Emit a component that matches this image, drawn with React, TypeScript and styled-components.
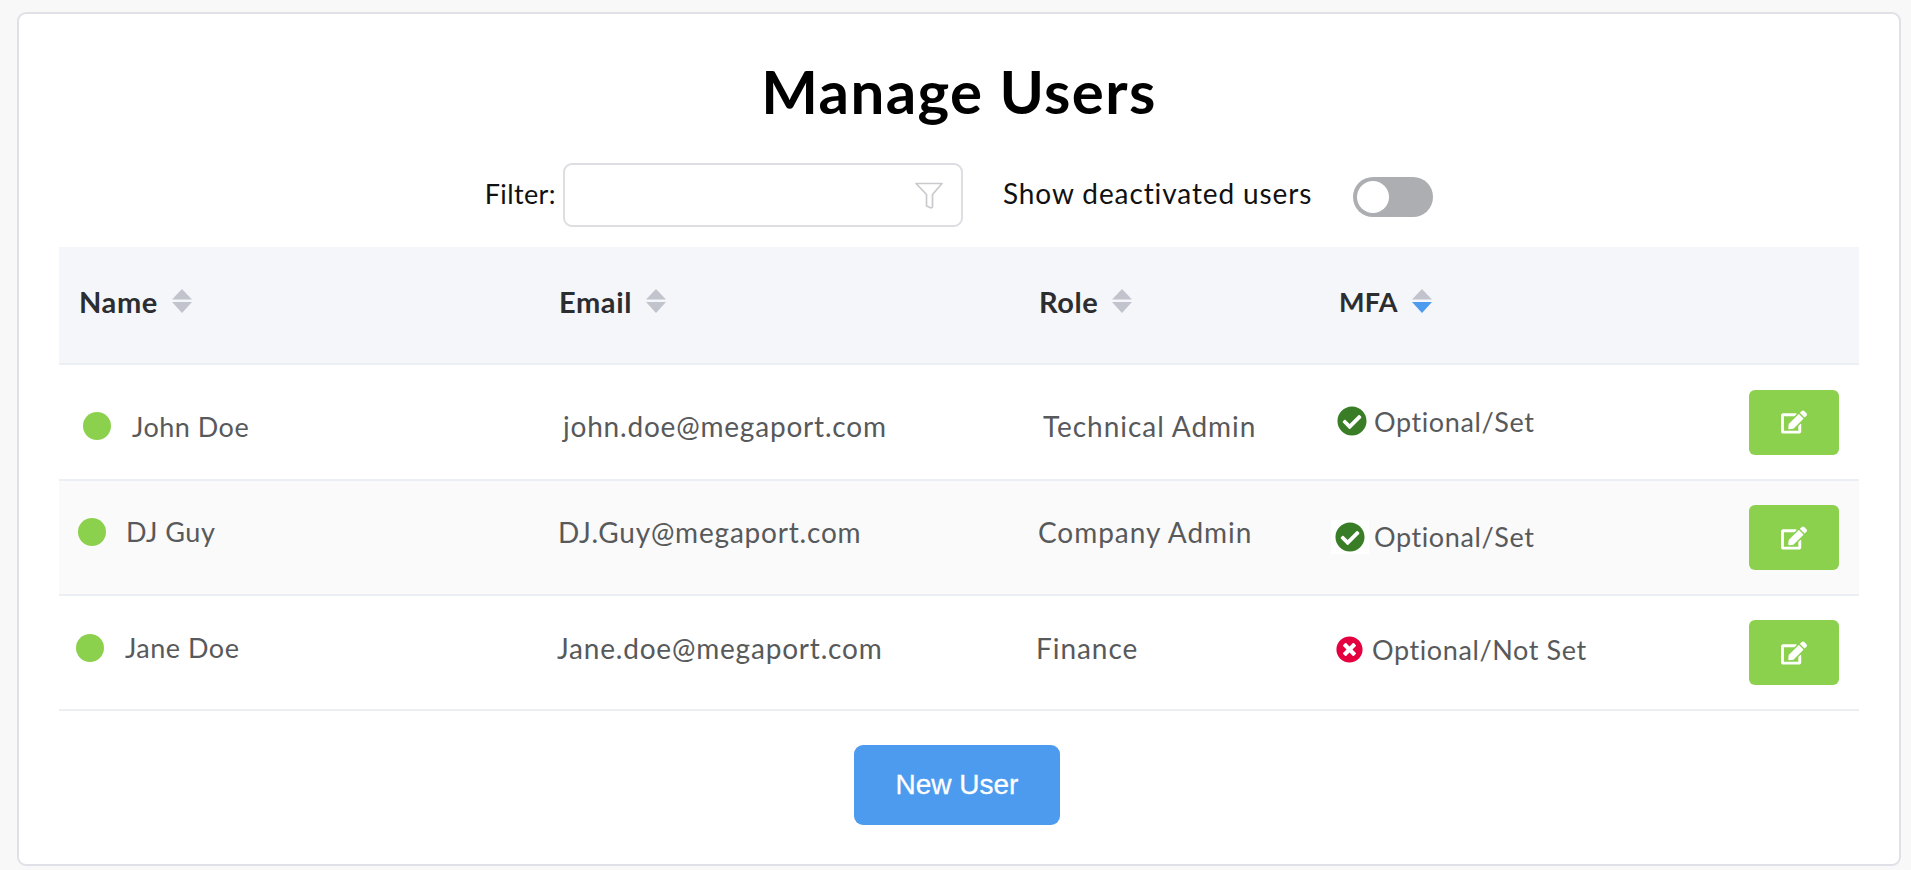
import React from "react";
import styled, { createGlobalStyle } from "styled-components";
import { FaCheckCircle, FaEdit, FaTimesCircle } from "react-icons/fa";

const colour = {
  green: "#8cd14e",
  blue: "#4d9bee",
  border: "#ebeef2",
  text: "#58595b",
  heading: "#2c2d30",
};

const GlobalStyle = createGlobalStyle`
  html, body {
    margin: 0;
    padding: 0;
    background: #f8f8f8;
  }
  body {
    font-family: "Lato", "Liberation Sans", sans-serif;
  }
`;

const Page = styled.div`
  box-sizing: border-box;
  height: 870px;
  padding: 12px 10px 4px 17px;
`;

const Card = styled.div`
  box-sizing: border-box;
  height: 854px;
  padding: 42px 40px 0;
  background: #fff;
  border: 2px solid #e0e1e7;
  border-radius: 9px;
  display: flex;
  flex-direction: column;
`;

const Title = styled.h1`
  margin: 0;
  height: 70px;
  line-height: 70px;
  font-size: 60px;
  font-weight: 700;
  letter-spacing: 1.4px;
  text-align: center;
  color: #000;
`;

const Toolbar = styled.div`
  margin-top: 37px;
  height: 64px;
  display: flex;
  align-items: center;
  justify-content: center;
`;

const ToolbarLabel = styled.span<{ $wide?: boolean }>`
  font-size: ${(p) => (p.$wide ? 28 : 27)}px;
  letter-spacing: ${(p) => (p.$wide ? 0.9 : 0.4)}px;
  color: #111;
  padding-bottom: 4px;
`;

const FilterBox = styled.div`
  box-sizing: border-box;
  width: 400px;
  height: 64px;
  margin: 0 40px 0 7px;
  padding-right: 18px;
  border: 2px solid #dddde2;
  border-radius: 9px;
  display: flex;
  align-items: center;
  justify-content: flex-end;
`;

const Toggle = styled.div`
  box-sizing: border-box;
  width: 80px;
  height: 40px;
  margin: 4px 0 0 41px;
  padding: 4px;
  background: #adaeb2;
  border-radius: 20px;
`;

const ToggleKnob = styled.div`
  width: 32px;
  height: 32px;
  background: #fff;
  border-radius: 50%;
`;

const Table = styled.div`
  margin-top: 20px;
`;

const gridColumns = "497px 480px 295px 1fr 110px";

const HeaderRow = styled.div`
  box-sizing: border-box;
  height: 118px;
  padding-bottom: 8px;
  background: #f5f6fa;
  border-bottom: 2px solid ${colour.border};
  display: grid;
  grid-template-columns: ${gridColumns};
  align-items: center;
`;

const HeaderCell = styled.div<{ $inset: number; $small?: boolean }>`
  padding-left: ${(p) => p.$inset}px;
  display: flex;
  align-items: center;
  gap: 14px;
  font-size: ${(p) => (p.$small ? 27 : 29)}px;
  font-weight: 700;
  letter-spacing: ${(p) => (p.$small ? 0.3 : 0.6)}px;
  color: ${colour.heading};
`;

const Row = styled.div<{ $striped?: boolean; $height: number }>`
  box-sizing: border-box;
  height: ${(p) => p.$height}px;
  background: ${(p) => (p.$striped ? "#fafafa" : "#fff")};
  border-bottom: 2px solid ${colour.border};
  display: grid;
  grid-template-columns: ${gridColumns};
  align-items: center;
`;

// the rows in the picture do not line up exactly, so each one says how far it is off
const TextCell = styled.div<{ $shift: number; $drop: number; $tracking: number; $large?: boolean }>`
  padding-left: ${(p) => p.$shift}px;
  padding-top: ${(p) => Math.max(p.$drop, 0) * 2}px;
  padding-bottom: ${(p) => Math.max(-p.$drop, 0) * 2}px;
  display: flex;
  align-items: center;
  font-size: ${(p) => (p.$large ? 28 : 27)}px;
  letter-spacing: ${(p) => p.$tracking}px;
  color: ${colour.text};
`;

const StatusDot = styled.span<{ $gap: number }>`
  width: 28px;
  height: 28px;
  margin-right: ${(p) => p.$gap}px;
  background: ${colour.green};
  border-radius: 50%;
  flex-shrink: 0;
`;

const MfaCell = styled(TextCell)<{ $gap: number }>`
  gap: ${(p) => p.$gap}px;
`;

const IconPlate = styled.span<{ $plate?: boolean; $colour: string }>`
  box-sizing: border-box;
  height: 34px;
  padding: 0 ${(p) => (p.$plate ? 4 : 0)}px;
  display: flex;
  align-items: center;
  background: ${(p) => (p.$plate ? "#fff" : "transparent")};
  color: ${(p) => p.$colour};
`;

const ActionCell = styled.div`
  display: flex;
  justify-content: flex-end;
  padding-right: 20px;
`;

const EditButton = styled.button`
  width: 92px;
  height: 65px;
  padding: 0;
  border: none;
  border-radius: 6px;
  background: ${colour.green};
  color: #fff;
  display: flex;
  align-items: center;
  justify-content: center;
`;

const NewUserButton = styled.button`
  align-self: center;
  width: 206px;
  height: 80px;
  margin: 34px 4px 0 0;
  padding: 0;
  border: none;
  border-radius: 9px;
  background: ${colour.blue};
  color: #fff;
  font-family: "Liberation Sans", sans-serif;
  font-size: 28px;
  -webkit-text-stroke: 0.3px #fff;
`;

function SortArrows({ active }: { active?: boolean }) {
  return (
    <svg width="20" height="24" viewBox="0 0 20 24">
      <polygon points="10,0 20,10.5 0,10.5" fill="#c1c4cd" />
      <polygon points="0,13 20,13 10,24" fill={active ? colour.blue : "#c1c4cd"} />
    </svg>
  );
}

function FunnelIcon() {
  return (
    <svg width="28" height="27" viewBox="0 0 28 27" fill="none">
      <path
        d="M1 1.5h26L17.5 12.5V24.5c0 1-1 1.5-2 1.2L11.5 24V12.5L1 1.5Z"
        stroke="#c9c9ce"
        strokeWidth="1.7"
        strokeLinejoin="round"
      />
    </svg>
  );
}

const users = [
  { name: "John Doe", email: "john.doe@megaport.com", role: "Technical Admin", mfa: "Optional/Set", set: true, height: 116, emailShift: 7, roleShift: 7, dotInset: 24, dotGap: 21, drop: 4, mfaInset: 6, mfaGap: 7, mfaDrop: -1, iconSize: 30 },
  { name: "DJ Guy", email: "DJ.Guy@megaport.com", role: "Company Admin", mfa: "Optional/Set", set: true, height: 115, emailShift: 2, roleShift: 2, dotInset: 19, dotGap: 20, drop: -6, mfaInset: 0, mfaGap: 5, mfaDrop: -1, iconSize: 30, plate: true },
  { name: "Jane Doe", email: "Jane.doe@megaport.com", role: "Finance", mfa: "Optional/Not Set", set: false, height: 115, emailShift: 1, roleShift: 0, dotInset: 17, dotGap: 21, drop: -5, mfaInset: 5, mfaGap: 9, mfaDrop: -3, iconSize: 27 },
];

export default function App() {
  return (
    <Page>
      <GlobalStyle />
      <Card>
        <Title>Manage Users</Title>
        <Toolbar>
          <ToolbarLabel>Filter:</ToolbarLabel>
          <FilterBox>
            <FunnelIcon />
          </FilterBox>
          <ToolbarLabel $wide>Show deactivated users</ToolbarLabel>
          <Toggle>
            <ToggleKnob />
          </Toggle>
        </Toolbar>
        <Table>
          <HeaderRow>
            <HeaderCell $inset={20}>Name <SortArrows /></HeaderCell>
            <HeaderCell $inset={3}>Email <SortArrows /></HeaderCell>
            <HeaderCell $inset={3}>Role <SortArrows /></HeaderCell>
            <HeaderCell $inset={8} $small>MFA <SortArrows active /></HeaderCell>
          </HeaderRow>
          {users.map((user, index) => (
            <Row key={user.email} $striped={index === 1} $height={user.height}>
              <TextCell $shift={user.dotInset} $drop={user.drop} $tracking={0.5}>
                <StatusDot $gap={user.dotGap} />
                {user.name}
              </TextCell>
              <TextCell $shift={user.emailShift} $drop={user.drop} $tracking={0.8} $large>{user.email}</TextCell>
              <TextCell $shift={user.roleShift} $drop={user.drop} $tracking={0.95} $large>{user.role}</TextCell>
              <MfaCell $shift={user.mfaInset} $drop={user.mfaDrop} $gap={user.mfaGap} $tracking={0.6}>
                <IconPlate $plate={user.plate} $colour={user.set ? "#3a7d27" : "#e4003f"}>
                  {user.set ? <FaCheckCircle size={user.iconSize} /> : <FaTimesCircle size={user.iconSize} />}
                </IconPlate>
                {user.mfa}
              </MfaCell>
              <ActionCell>
                <EditButton>
                  <FaEdit size={26} />
                </EditButton>
              </ActionCell>
            </Row>
          ))}
        </Table>
        <NewUserButton>New User</NewUserButton>
      </Card>
    </Page>
  );
}
